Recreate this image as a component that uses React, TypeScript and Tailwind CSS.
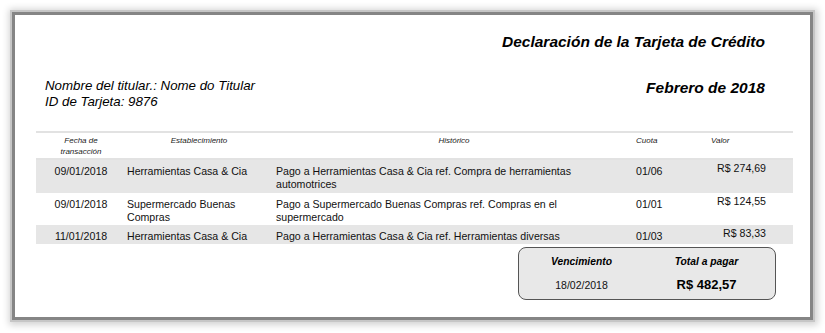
import React from 'react'

type Row = { fecha: string; est: string; hist: string; cuota: string; valor: string }

const ROWS: Row[] = [
  {
    fecha: '09/01/2018',
    est: 'Herramientas Casa & Cia',
    hist: 'Pago a Herramientas Casa & Cia ref. Compra de herramientas automotrices',
    cuota: '01/06',
    valor: 'R$ 274,69',
  },
  {
    fecha: '09/01/2018',
    est: 'Supermercado Buenas Compras',
    hist: 'Pago a Supermercado Buenas Compras ref. Compras en el supermercado',
    cuota: '01/01',
    valor: 'R$ 124,55',
  },
  {
    fecha: '11/01/2018',
    est: 'Herramientas Casa & Cia',
    hist: 'Pago a Herramientas Casa & Cia ref. Herramientas diversas',
    cuota: '01/03',
    valor: 'R$ 83,33',
  },
]

const COLS = 'grid grid-cols-[90px_146px_364px_70px_87px]'

export default function App() {
  return (
    <div className="w-[825px] h-[333px] bg-white p-[12px] font-['Liberation_Sans',Arial,sans-serif] text-black">
      <div className="w-[801px] h-[308px] border-[3px] border-[#858585] bg-white shadow-[0_0_0_2px_#c6c6c6,1px_1px_7px_4px_rgba(0,0,0,0.18)] flex flex-col">
        {/* Title */}
        <div className="pt-[17px] pr-[45px] text-right text-[15.5px] leading-[20px] font-bold italic">
          Declaración de la Tarjeta de Crédito
        </div>

        {/* Holder + month */}
        <div className="mt-[26px] pl-[30px] pr-[45px] flex justify-between items-start">
          <div className="italic text-[13.3px] leading-[16px]">
            <div>Nombre del titular.: Nome do Titular</div>
            <div>ID de Tarjeta: 9876</div>
          </div>
          <div className="text-[15.5px] leading-[20px] font-bold italic">Febrero de 2018</div>
        </div>

        {/* Transactions */}
        <div className="mt-[21px] ml-[21px] mr-[17px]">
          <div className={`${COLS} border-y-2 border-[#e2e2e2] pt-[2px] pb-[1px] text-[8px] leading-[11px] italic text-[#222]`}>
            <div className="text-center">
              Fecha de
              <br />
              transacción
            </div>
            <div className="text-center">Establecimiento</div>
            <div className="text-center">Histórico</div>
            <div>Cuota</div>
            <div className="pl-[5px]">Valor</div>
          </div>

          {ROWS.map((r, i) => (
            <div
              key={i}
              className={`${COLS} text-[10.6px] leading-[13.3px] text-[#111] ${i % 2 === 0 ? 'bg-[#e6e6e6]' : 'bg-white'}`}
            >
              <div className="text-center pt-[5px] pb-[1px]">{r.fecha}</div>
              <div className="pl-[1px] pr-[8px] pt-[5px] pb-[1px]">{r.est}</div>
              <div className="pl-[4px] pr-[30px] pt-[5px] pb-[1px]">{r.hist}</div>
              <div className="pt-[5px] pb-[1px]">{r.cuota}</div>
              <div className="text-right pr-[27px] pt-[2px]">{r.valor}</div>
            </div>
          ))}
        </div>

        {/* Summary */}
        <div className="mt-[3px] ml-auto mr-[34px] w-[258px] h-[53px] rounded-[8px] border-[1.5px] border-[#555] bg-[#e8e8e8] grid grid-cols-2 pr-[6px] text-center">
          <div className="flex flex-col">
            <div className="pt-[7px] text-[10.3px] leading-[13px] font-bold italic">Vencimiento</div>
            <div className="pt-[11px] text-[10.5px] leading-[13px] text-[#111]">18/02/2018</div>
          </div>
          <div className="flex flex-col">
            <div className="pt-[7px] text-[10.3px] leading-[13px] font-bold italic">Total a pagar</div>
            <div className="pt-[8px] text-[13px] leading-[17px] font-bold">R$ 482,57</div>
          </div>
        </div>
      </div>
    </div>
  )
}
